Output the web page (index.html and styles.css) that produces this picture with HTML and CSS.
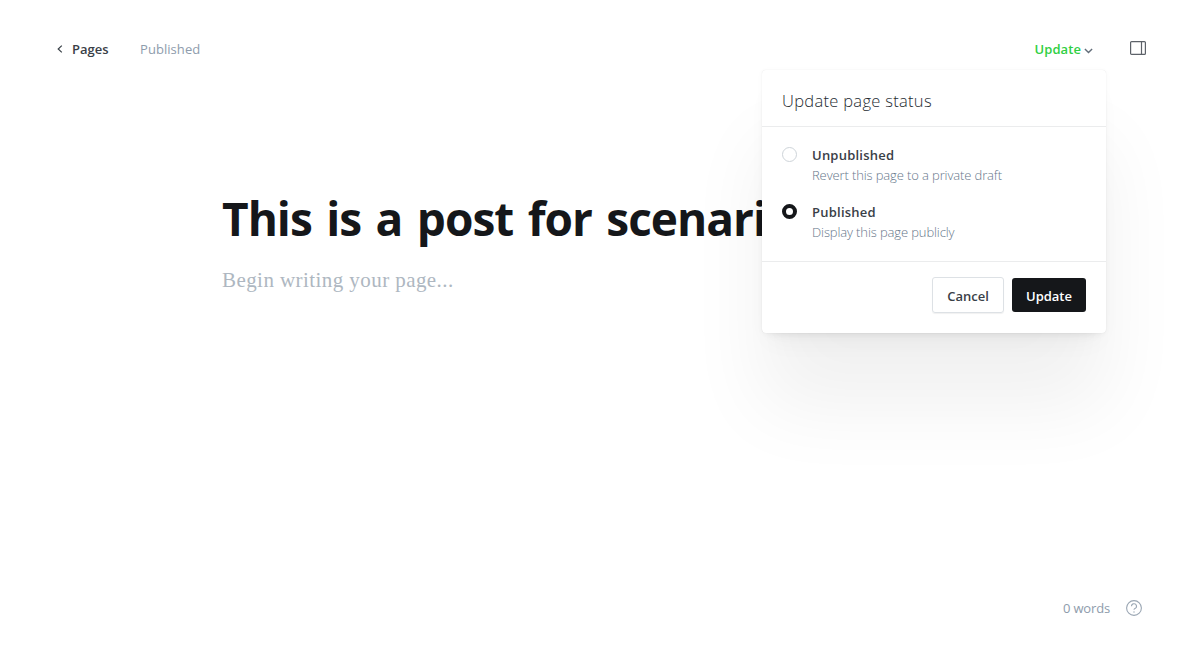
FILE: index.html
```html
<!DOCTYPE html>
<html lang="en">
<head>
<meta charset="utf-8">
<title>Edit page</title>
<link rel="stylesheet" href="styles.css">
</head>
<body>
<div class="editor">
  <header class="topbar">
    <a class="back"><svg class="back-icon" width="6" height="8" viewBox="0 0 6 8"><path d="M4.8.6 1.2 4l3.6 3.4"/></svg><span class="back-label">Pages</span></a>
    <span class="state">Published</span>
    <div class="publish-menu">
      <button class="trigger"><span class="trigger-label">Update</span><svg class="chevron" width="9" height="6" viewBox="0 0 9 6"><path d="m.9 1 3.6 3.6L8.1 1"/></svg></button>
      <section class="panel">
        <h2 class="panel-title">Update page status</h2>
        <div class="options">
          <label class="option">
            <span class="radio"></span>
            <span class="option-text"><span class="option-name">Unpublished</span><span class="option-desc">Revert this page to a private draft</span></span>
          </label>
          <label class="option">
            <span class="radio checked"></span>
            <span class="option-text"><span class="option-name">Published</span><span class="option-desc">Display this page publicly</span></span>
          </label>
        </div>
        <footer class="actions">
          <button class="btn cancel">Cancel</button>
          <button class="btn primary">Update</button>
        </footer>
      </section>
    </div>
    <svg class="sidebar-icon" width="16" height="14" viewBox="0 0 16 14"><rect x=".6" y=".6" width="14.8" height="12.8" rx="1"/><path d="M11.5.6v12.8"/></svg>
  </header>
  <main class="canvas">
    <h1 class="title">This is a post for scenario</h1>
    <p class="body">Begin writing your page...</p>
  </main>
  <footer class="status">
    <span class="words">0 words</span>
    <svg class="help" width="16" height="16" viewBox="0 0 16 16"><circle cx="8" cy="8" r="7.4"/><path d="M5.5 6.3a2.5 2.5 0 1 1 3.5 2.2c-.7.3-1 .6-1 1.3"/><circle class="dot" cx="8" cy="12" r=".7"/></svg>
  </footer>
</div>
</body>
</html>
```

FILE: styles.css
```css
* { box-sizing: border-box; }
body { margin: 0; background: #fff; font-family: "Open Sans", "Noto Sans", sans-serif; color: #15171a; }
svg { fill: none; stroke: currentColor; flex: none; display: block; }
button { font: inherit; border: 0; background: none; padding: 0; }
h1, h2, p { margin: 0; font-weight: 400; }

.editor { height: 655px; display: flex; flex-direction: column; overflow: hidden; }

.topbar { display: flex; align-items: center; height: 98px; padding: 0 38px 0 57px; font-size: 13px; line-height: 20px; flex: none; }
.back { display: flex; align-items: center; gap: 9px; color: #394047; font-weight: 600; width: 83px; }
.back-icon { stroke-width: 1.2; margin-bottom: 1px; }
.state { color: #8e9cac; letter-spacing: .06px; }
.publish-menu { position: relative; margin-left: auto; margin-right: 37px; }
.trigger { display: flex; align-items: center; gap: 3px; color: #30cf43; font-weight: 600; height: 20px; letter-spacing: .08px; }
.chevron { color: #626d79; stroke-width: 1.4; margin-top: 3px; }
.sidebar-icon { color: #5d6269; stroke-width: 1.2; margin-bottom: 2px; }

.panel { position: absolute; top: 31px; right: -13px; z-index: 2; width: 344px; height: 263px; background: #fff; border-radius: 4px; color: #394047; letter-spacing: 0;
  box-shadow: 0 0 1px rgba(0,0,0,.12), 0 1px 6px rgba(0,0,0,.03), 0 8px 10px -8px rgba(0,0,0,.08), 0 16px 24px -8px rgba(0,0,0,.04), 0 74px 80px rgba(0,0,0,.06); }
.panel-title { height: 57px; padding: 19px 20px 0; border-bottom: 1px solid #ebeced; font-size: 16.5px; line-height: 24px; font-weight: 300; letter-spacing: .3px; color: #252b31; }
.options { height: 135px; padding: 18px 20px 0; border-bottom: 1px solid #ebeced; }
.option { display: flex; gap: 15px; height: 57px; }
.radio { width: 15px; height: 15px; margin-top: 2px; flex: none; border: 1px solid #ced4d9; border-radius: 50%; }
.radio.checked { border: 4px solid #15171a; }
.option-text { display: flex; flex-direction: column; }
.option-name { font-weight: 600; line-height: 20px; letter-spacing: .23px; }
.option-desc { font-weight: 300; line-height: 20px; font-size: 13px; letter-spacing: -.12px; color: #66768a; }
.actions { display: flex; justify-content: flex-end; align-items: center; gap: 8px; padding: 15px 20px 0; }
.btn { height: 34px; border-radius: 3px; font-weight: 600; white-space: nowrap; padding-top: 2px; }
.cancel { width: 72px; height: 36px; border: 1px solid #dde1e5; box-shadow: 0 1px 1px rgba(0,0,0,.06); color: #394047; }
.primary { width: 74px; background: #15171a; color: #fff; }

.canvas { flex: 1; padding: 87px 0 0 222px; }
.title { font-size: 46px; line-height: 66px; font-weight: 700; letter-spacing: -1px; word-spacing: 3.5px; white-space: nowrap; }
.body { margin-top: 13px; font-family: "Liberation Serif", serif; font-size: 21px; line-height: 32px; letter-spacing: .43px; color: #aeb7c1; }

.status { display: flex; align-items: center; justify-content: flex-end; gap: 16px; padding: 0 42px 37px 0; font-size: 13px; line-height: 20px; color: #8e9cac; }
.words { letter-spacing: -.15px; }
.help { stroke-width: 1.1; color: #9aa6b3; }
.dot { fill: currentColor; stroke: none; }
```
